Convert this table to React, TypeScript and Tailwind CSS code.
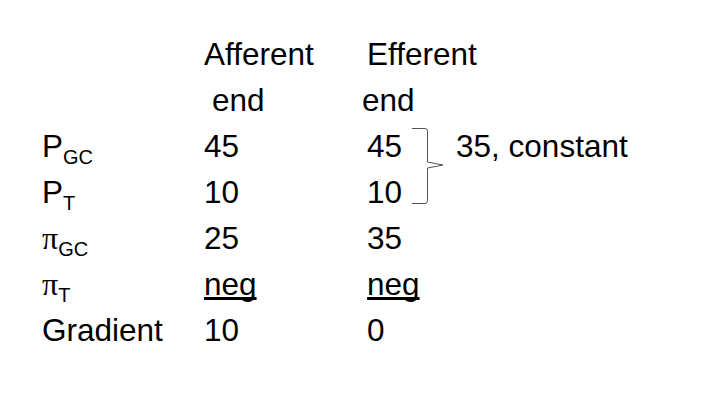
const rowCls = 'grid grid-cols-[162px_163px_1fr] h-[46px] leading-[46px]';

function Sub({ base, sub, pi }: { base: string; sub: string; pi?: boolean }) {
    return (
        <span className="whitespace-nowrap">
            <span className={pi ? "font-['Liberation_Serif',serif] text-[32px]" : ''}>{base}</span>
            <span className="relative top-[7px] text-[20px]">{sub}</span>
        </span>
    );
}

function Brace() {
    return (
        <svg className="absolute left-[45px] top-[5px]" width="34" height="78" viewBox="0 0 34 78" fill="none">
            <path d="M0 0.5 H13 Q15.5 0.5 15.5 3 V34 L31 37 L15.5 40 V72.5 Q15.5 75.5 13 75.5 H0" stroke="#555" strokeWidth="1" />
        </svg>
    );
}

export default function App() {
    return (
        <div className="h-[410px] w-[708px] bg-white pl-[42px] pt-[31px] font-['Liberation_Sans',Arial,sans-serif] text-[31.5px] text-black">
            <div className={rowCls}>
                <span />
                <span>Afferent</span>
                <span>Efferent</span>
            </div>
            <div className={rowCls}>
                <span />
                <span className="pl-[8px]">end</span>
                <span className="-ml-[5px]">end</span>
            </div>
            <div className={rowCls}>
                <Sub base="P" sub="GC" />
                <span>45</span>
                <div className="relative flex">
                    <span>45</span>
                    <Brace />
                    <span className="ml-[54px] whitespace-nowrap">35, constant</span>
                </div>
            </div>
            <div className={rowCls}>
                <Sub base="P" sub="T" />
                <span>10</span>
                <span>10</span>
            </div>
            <div className={rowCls}>
                <Sub base="π" sub="GC" pi />
                <span>25</span>
                <span>35</span>
            </div>
            <div className={rowCls}>
                <Sub base="π" sub="T" pi />
                <span><span className="underline [text-decoration-skip-ink:none]">neg</span></span>
                <span><span className="underline [text-decoration-skip-ink:none]">neg</span></span>
            </div>
            <div className={rowCls}>
                <span>Gradient</span>
                <span>10</span>
                <span>0</span>
            </div>
        </div>
    );
}
